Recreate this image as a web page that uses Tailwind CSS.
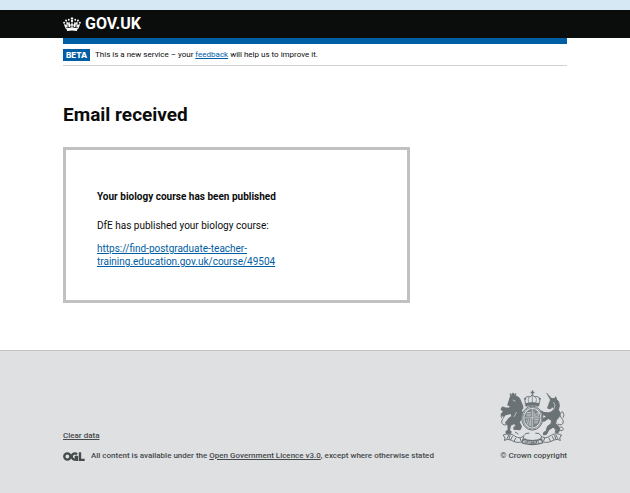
<!DOCTYPE html>
<html lang="en">
<head>
<meta charset="utf-8">
<meta name="viewport" content="width=device-width, initial-scale=1">
<title>Email received</title>
<script src="https://cdn.jsdelivr.net/npm/@tailwindcss/browser@4"></script>
</head>
<body class="flex min-h-screen flex-col bg-white font-['Roboto','Liberation_Sans',sans-serif] text-[10px] leading-[13px] text-[#0b0c0c]">
<div class="h-[10px] bg-[#d5e8f3]"></div>
<header class="bg-[#0b0c0c] px-[63px]">
  <div class="mx-auto flex h-7 max-w-[504px] items-center">
    <a href="#" class="flex items-center gap-1 text-base leading-5 font-bold text-white">
      <svg class="h-[15px] w-[18px]" viewBox="0 0 36 30" fill="currentColor" stroke="currentColor" aria-hidden="true">
        <path d="M18 0v6M15.500 3h5" fill="none" stroke-width="2"/>
        <g stroke="none">
          <circle cx="18" cy="8" r="2.300"/><circle cx="11.500" cy="5.500" r="1.900"/><circle cx="24.500" cy="5.500" r="1.900"/>
          <circle cx="6" cy="7" r="1.900"/><circle cx="30" cy="7" r="1.900"/><circle cx="2.200" cy="11.500" r="1.900"/><circle cx="33.800" cy="11.500" r="1.900"/>
        </g>
        <path d="M7 24 3 15l5 4V11l5 6-1-7M29 24l4-9-5 4v-8l-5 6 1-7M18 11v11M13 17l5-2 5 2" fill="none" stroke-width="2.200"/>
        <circle cx="12.500" cy="18" r="2" stroke="none"/><circle cx="23.500" cy="18" r="2" stroke="none"/>
        <path d="M7 22.500q11-3 22 0l-1 5.500q-10-2.500-20 0z" stroke="none"/>
      </svg>
      <span>GOV.UK</span>
    </a>
  </div>
</header>
<div class="px-[63px]">
  <div class="mx-auto max-w-[504px]">
    <div class="h-[6px] bg-[#005ea5]"></div>
    <div class="flex items-center gap-[5px] border-b border-[#d0d2d4] pt-[5px] pb-1 text-[8px] leading-3">
      <strong class="bg-[#005ea5] px-[3px] font-['Inter','Liberation_Sans',sans-serif] font-extrabold text-white">BETA</strong>
      <p>This is a new service – your <a href="#" class="text-[#005ea5] underline">feedback</a> will help us to improve it.</p>
    </div>
  </div>
</div>
<main class="grow px-[63px] pt-[37px] pb-[47px]">
  <div class="mx-auto max-w-[504px]">
    <h1 class="text-[19px] leading-6 font-bold">Email received</h1>
    <div class="mt-5 max-w-[347px] border-3 border-[#bfc1c3] px-[31px] pt-10 pb-8">
      <h2 class="font-bold">Your biology course has been published</h2>
      <p class="mt-4">DfE has published your biology course:</p>
      <p class="mt-[10px] max-w-[200px]"><a href="#" class="text-[#005ea5] underline">https://find-postgraduate-teacher-<wbr>training.education.gov.uk/course/49504</a></p>
    </div>
  </div>
</main>
<footer class="border-t border-[#bfc1c3] bg-[#dee0e2] px-[63px] pt-[38px] pb-[31px] text-[8px] leading-3 font-medium text-[#454a4c]">
  <div class="mx-auto flex max-w-[504px] items-end justify-between">
    <div>
      <a href="#" class="underline">Clear data</a>
      <div class="mt-2 flex items-center gap-[6px]">
        <svg class="h-[9px] w-[22px]" viewBox="0 0 66 27" fill="none" stroke="currentColor" stroke-width="7" role="img" aria-label="OGL">
          <circle cx="13" cy="13.500" r="9.200"/><path d="M42 7A9.200 9.200 0 1 0 42 20V15H35M42 14v13M51 1v22.500h14"/>
        </svg>
        <p>All content is available under the <a href="#" class="underline">Open Government Licence v3.0</a>, except where otherwise stated</p>
      </div>
    </div>
    <a href="#" class="flex flex-col items-end gap-1">
      <svg class="h-[57px] w-[68px]" viewBox="30 26 204 170" fill="#6a7276" stroke="#6a7276" stroke-width="2" stroke-linecap="round" stroke-linejoin="round" aria-hidden="true">
        <g id="crown">
          <path d="M128 30h5l-1 4h4v4h-4l1 5h-5l1-5h-4v-4h4z" stroke="none"/>
          <path d="M111 70c-9-15 0-25 11-21l8-5 8 5c11-4 20 6 11 21z" fill="none" stroke-width="3"/>
          <path d="M121 69c-5-10-4-15 0-20M139 69c5-10 4-15 0-20M130 45v24" fill="none"/>
          <path d="M109 69q21-6 42 0l-2 8q-19-5-38 0z"/>
          <circle cx="108" cy="55" r="2"/><circle cx="152" cy="55" r="2"/>
        </g>
        <g id="lion">
          <path d="M64 45l-1-6 5 3 4-5 4 5 5-3-2 8z"/>
          <path stroke-width="4" d="M65 48l12-1c9 1 16 8 18 16 3 9 7 12 6 20l-5 7 4 6-2 17-8 12 7 13-4 9-18-1v-6l8-2-7-10-12 7-3 15 5 4-2 6H54l-3-6 7-5-1-17-7-5 9-12 10-8-3-9-15 4-9 5-5-5 5-6 14-5-12 1-7-5 3-7 7 2 15 2 2-8-7-3 2-6z"/>
          <path d="M55 132c-16 6-21-8-13-18 6-8 4-11-1-17-4 5-6 9-4 14M79 155l8 5" fill="none" stroke-width="3"/>
          <path d="M72 59l7 3M82 96l-6 12" fill="none" stroke="#dee0e2"/>
        </g>
        <g id="unicorn">
          <path d="M174 39l16 17-4 3z"/>
          <path stroke-width="3" d="M187 55l10-1 3-5 3 8 6 7 2 12-3 12 5 9-3 13-8 9-2 11 9 7 2 10-5 10-8-2 5-9-11-6-13 9-7 13-9 1 1-7 8-5 3-13 11-8 2-10-10-6-12 8-13-1-2-6 13 0 9-9-11-3-12-8 4-5 11 6 14 1 11-4 5-10-3-4-9 6-7-2 2-7z"/>
          <path d="M207 131c18 8 19-10 11-18-8-9-4-15 2-20 4 7 7 10 3 17M205 151c-10 0-10-11-1-11s10 11 3 17M216 150c-9-3-6-12 2-10 7 2 6 13-2 10" fill="none" stroke-width="3"/>
          <path d="M194 66l4 8-4 13" fill="none" stroke="#dee0e2"/>
        </g>
        <g id="shield" fill="none">
          <ellipse cx="130" cy="113" rx="32" ry="36" fill="#dee0e2" stroke-width="3"/>
          <ellipse cx="130" cy="113" rx="28" ry="32" stroke-width="3" stroke-dasharray="2 3"/>
          <ellipse cx="130" cy="113" rx="23" ry="27" fill="#7c8589"/>
          <path d="M130 87v53M107 112h46" stroke="#dee0e2" stroke-width="2"/>
          <path d="M115 96h10m-12 5h12m-11 5h11M135 94v13h13V96l-10 7M113 118l3 13m3-14 2 17m4-18v19M137 117h11m-11 5h10m-10 5h8" stroke="#dee0e2" stroke-width="2"/>
        </g>
        <g id="ribbon" fill="none">
          <path d="M43 164c15-9 28-2 38 5 14 7 23-1 29-10l10-1M217 164c-15-9-28-2-38 5-14 7-23-1-29-10l-10-1" stroke-width="3"/>
          <path d="M43 164l5 9-2 7c14-8 23 2 32 4 13 4 23 1 31-9M217 164l-5 9 2 7c-14-8-23 2-32 4-13 4-23 1-31-9M59 164l-5 10m9-9-3 10m10-7-5 10m15-5-5 10m18-10 3 8m6-13 4 9M201 164l5 10m-9-9 3 10m-10-7 5 10m-15-5 5 10m-18-10-3 8m-6-13-4 9" stroke-width="3"/>
          <path d="M102 176q28 9 56 0l3 11q-31 10-62 0z" stroke-width="4"/>
          <path d="M108 181l1 7m4-6 5 1m-5 3 5 1m5-4v7m5-7v7l5-7v7m5-7-1 6 5-1 1-6m4-1 1 7" stroke-width="3"/>
        </g>
      </svg>
      <span>© Crown copyright</span>
    </a>
  </div>
</footer>
</body>
</html>
